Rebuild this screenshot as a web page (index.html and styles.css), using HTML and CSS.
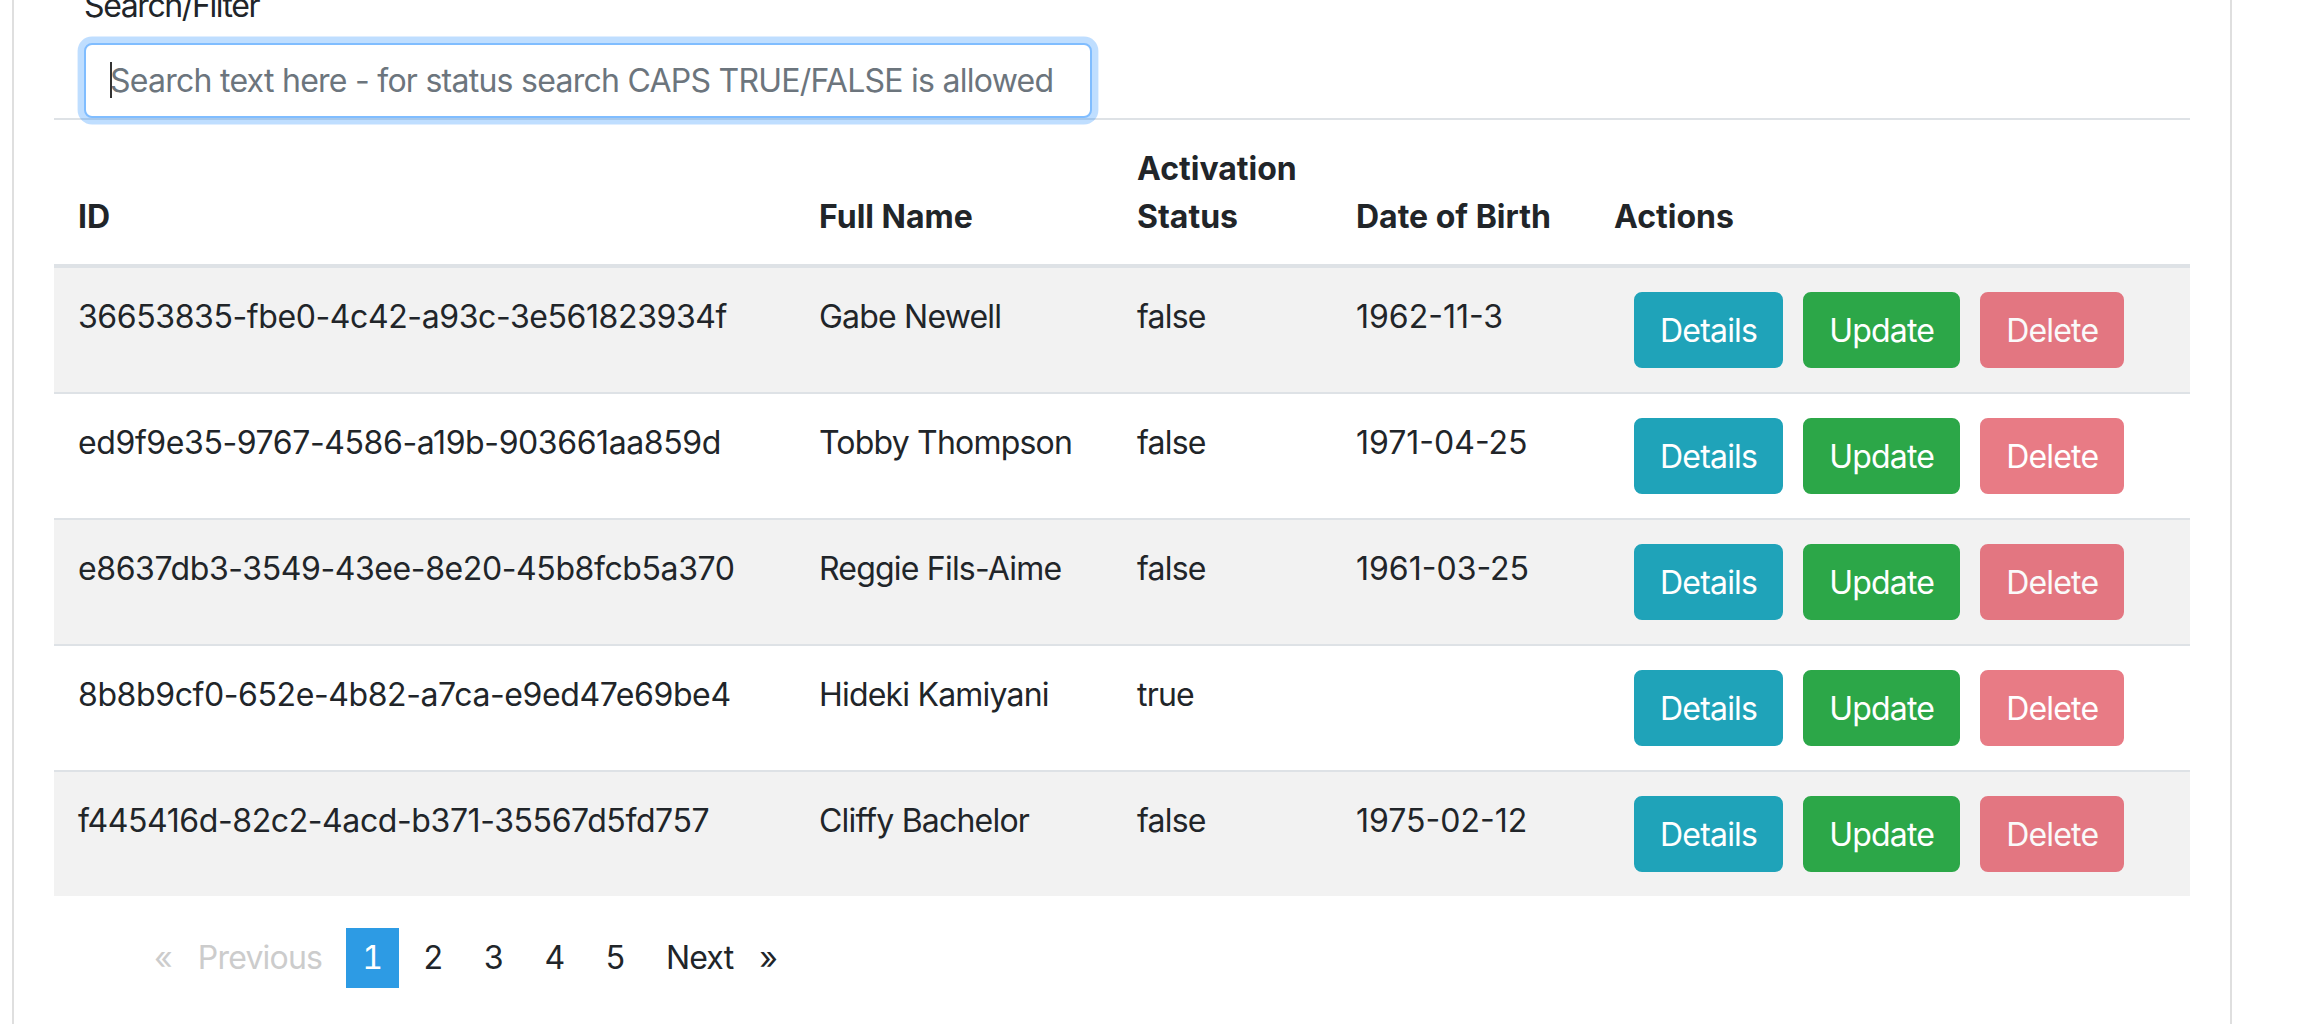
FILE: index.html
```html
<!DOCTYPE html>
<html lang="en">
<head>
<meta charset="utf-8">
<title>Users</title>
<link rel="stylesheet" href="styles.css">
</head>
<body>
<div class="page">
  <div class="card">
    <div class="search-group">
      <label class="search-label" for="search">Search/Filter</label>
      <div class="input-wrap">
        <input id="search" class="search-input" type="text" placeholder="Search text here - for status search CAPS TRUE/FALSE is allowed">
        <span class="caret"></span>
      </div>
    </div>
    <table class="users">
      <thead>
        <tr>
          <th class="c-id">ID</th>
          <th class="c-name">Full Name</th>
          <th class="c-status">Activation Status</th>
          <th class="c-dob">Date of Birth</th>
          <th class="c-actions">Actions</th>
        </tr>
      </thead>
      <tbody>
        <tr>
          <td class="id">36653835-fbe0-4c42-a93c-3e561823934f</td>
          <td>Gabe Newell</td>
          <td>false</td>
          <td class="num">1962-11-3</td>
          <td><div class="actions"><button class="btn btn-info">Details</button><button class="btn btn-success">Update</button><button class="btn btn-danger">Delete</button></div></td>
        </tr>
        <tr>
          <td class="id">ed9f9e35-9767-4586-a19b-903661aa859d</td>
          <td>Tobby Thompson</td>
          <td>false</td>
          <td class="num">1971-04-25</td>
          <td><div class="actions"><button class="btn btn-info">Details</button><button class="btn btn-success">Update</button><button class="btn btn-danger">Delete</button></div></td>
        </tr>
        <tr>
          <td class="id">e8637db3-3549-43ee-8e20-45b8fcb5a370</td>
          <td>Reggie Fils-Aime</td>
          <td>false</td>
          <td class="num">1961-03-25</td>
          <td><div class="actions"><button class="btn btn-info">Details</button><button class="btn btn-success">Update</button><button class="btn btn-danger">Delete</button></div></td>
        </tr>
        <tr>
          <td class="id">8b8b9cf0-652e-4b82-a7ca-e9ed47e69be4</td>
          <td>Hideki Kamiyani</td>
          <td>true</td>
          <td class="num"></td>
          <td><div class="actions"><button class="btn btn-info">Details</button><button class="btn btn-success">Update</button><button class="btn btn-danger">Delete</button></div></td>
        </tr>
        <tr>
          <td class="id">f445416d-82c2-4acd-b371-35567d5fd757</td>
          <td>Cliffy Bachelor</td>
          <td>false</td>
          <td class="num">1975-02-12</td>
          <td><div class="actions"><button class="btn btn-info">Details</button><button class="btn btn-success">Update</button><button class="btn btn-danger">Delete</button></div></td>
        </tr>
      </tbody>
    </table>
    <ul class="pager">
      <li class="pager-item disabled"><span class="pager-link"><span class="arrow-left">«</span>Previous</span></li>
      <li class="pager-item active"><span class="pager-link page-num">1</span></li>
      <li class="pager-item"><span class="pager-link page-num">2</span></li>
      <li class="pager-item"><span class="pager-link page-num">3</span></li>
      <li class="pager-item"><span class="pager-link page-num">4</span></li>
      <li class="pager-item"><span class="pager-link page-num">5</span></li>
      <li class="pager-item"><span class="pager-link">Next<span class="arrow-right">»</span></span></li>
    </ul>
  </div>
</div>
</body>
</html>
```

FILE: styles.css
```css
* { box-sizing: border-box; }

html, body {
  margin: 0;
  padding: 0;
  background: #ffffff;
}

body {
  font-family: "Inter", "Liberation Sans", sans-serif;
  font-size: 32px;
  line-height: 48px;
  color: #212529;
  letter-spacing: -0.8px;
}

.page {
  padding-left: 12px;
}

.card {
  width: 2220px;
  margin-top: -60px;
  border: 2px solid #dfdfdf;
  padding: 40px;
  background: #fff;
}

.search-group {
  width: 1068px;
  padding: 0 30px;
}

.search-label {
  display: block;
  margin-bottom: 13px;
  letter-spacing: -1.4px;
}

.input-wrap {
  position: relative;
  z-index: 1;
}

.search-input {
  display: block;
  width: 100%;
  height: 75px;
  margin: 0;
  padding: 0 24px;
  font-family: inherit;
  font-size: 32px;
  letter-spacing: -0.74px;
  color: #495057;
  background: #fff;
  border: 2px solid #80bdff;
  border-radius: 8px;
  box-shadow: 0 0 0 6.4px rgba(0, 123, 255, 0.25);
  outline: none;
}

.search-input::placeholder {
  color: #6c757d;
  opacity: 1;
}

.caret {
  position: absolute;
  left: 26px;
  top: 19px;
  width: 2px;
  height: 36px;
  background: #333;
}

.users {
  width: 2136px;
  table-layout: fixed;
  border-collapse: separate;
  border-spacing: 0;
  margin-bottom: 32px;
}

.c-id { width: 741px; }
.c-name { width: 318px; }
.c-status { width: 219px; }
.c-dob { width: 258px; }
.c-actions { width: 600px; }

.users th {
  text-align: left;
  vertical-align: bottom;
  font-weight: 700;
  letter-spacing: 0;
  padding: 25px 24px 23px;
  border-top: 2px solid #dee2e6;
  border-bottom: 4px solid #dee2e6;
}

.users td {
  vertical-align: top;
  padding: 25px 24px 23px;
  border-top: 2px solid #dee2e6;
  white-space: nowrap;
}

.users td.id {
  letter-spacing: -0.4px;
}

.users td.num {
  letter-spacing: 0;
}

.users tbody tr:first-child td {
  border-top: 0;
}

.users tbody tr:nth-child(odd) td {
  background: #f2f2f2;
}

.actions {
  display: flex;
  gap: 20px;
  padding-left: 20px;
  margin-top: -1px;
  margin-bottom: 1px;
}

.btn {
  display: inline-block;
  margin: 0;
  padding: 13px 24px 11px;
  font-family: inherit;
  font-size: 32px;
  line-height: 48px;
  letter-spacing: -0.8px;
  font-weight: 400;
  color: #fff;
  border: 2px solid transparent;
  border-radius: 8px;
  cursor: pointer;
}

.btn-info {
  background: #1fa3b9;
  border-color: #1fa3b9;
}

.btn-success {
  background: #2ca748;
  border-color: #2ca748;
}

.btn-danger {
  background: #dc3545;
  border-color: #dc3545;
  opacity: 0.65;
}

.pager {
  display: flex;
  gap: 8px;
  list-style: none;
  margin: 0;
  padding: 0 0 0 84px;
}

.pager-link {
  display: block;
  height: 60px;
  line-height: 60px;
  padding: 0 16px;
  color: #212529;
}

.page-num {
  font-variant-numeric: tabular-nums;
  letter-spacing: 0;
  padding: 0 16px;
}

.pager-item.disabled .pager-link {
  color: #cccccc;
}

.pager-item.active .pager-link {
  background: #2d9be4;
  color: #fff;
}

.arrow-left {
  margin-right: 26px;
}

.arrow-right {
  margin-left: 26px;
}
```
